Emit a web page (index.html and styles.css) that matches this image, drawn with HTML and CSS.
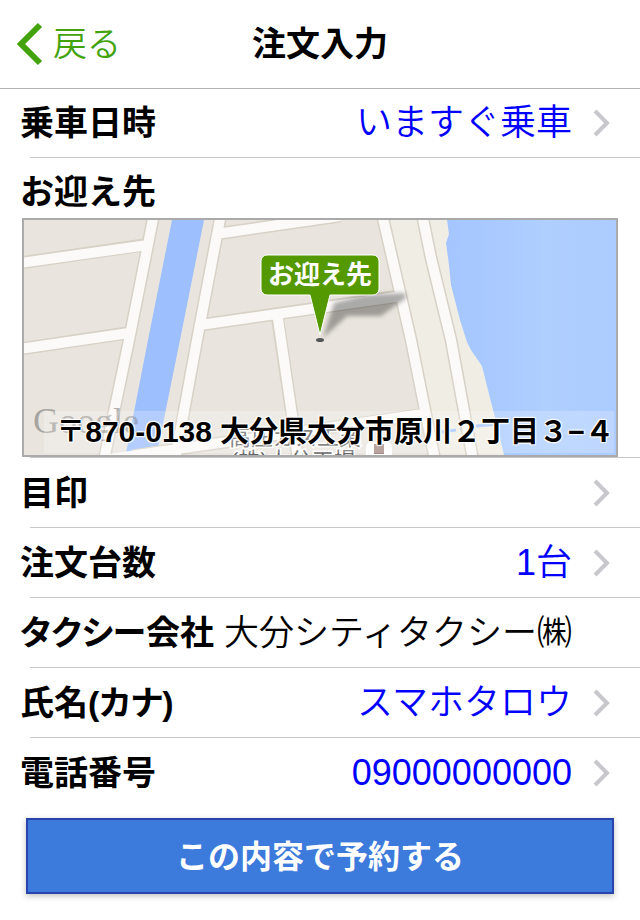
FILE: index.html
```
<!DOCTYPE html>
<html lang="ja">
<head>
<meta charset="utf-8">
<meta name="viewport" content="width=device-width, initial-scale=1">
<title>注文入力</title>
<link rel="stylesheet" href="styles.css">
</head>
<body>
<header class="header">
  <a class="back" href="#">
    <svg class="back-icon" viewBox="0 0 26 44" aria-hidden="true"><path d="M23 3 4 22 23 41"/></svg>
    <span>戻る</span>
  </a>
  <h1 class="title">注文入力</h1>
</header>
<main>
  <div class="list">
    <a class="row" href="#">
      <span class="label">乗車日時</span>
      <span class="value">いますぐ乗車</span>
      <svg class="chevron" viewBox="0 0 18 28" aria-hidden="true"><path d="M3 2 15 14 3 26"/></svg>
    </a>
    <section class="pickup">
      <h2 class="label pickup-label">お迎え先</h2>
      <div class="map">
        <svg class="map-art" viewBox="24 220 592 235" preserveAspectRatio="xMidYMid slice" role="img" aria-label="お迎え先">
          <defs>
            <linearGradient id="sea" x1="0" y1="0" x2="1" y2="0">
              <stop offset="0" stop-color="#a4c5ff"/>
              <stop offset="0.6" stop-color="#afcfff"/>
              <stop offset="1" stop-color="#accbff"/>
            </linearGradient>
            <filter id="soft" x="-20%" y="-20%" width="140%" height="140%"><feGaussianBlur stdDeviation="2"/></filter>
          </defs>
          <rect x="24" y="220" width="592" height="235" fill="#e9e5de"/>
          <path d="M383 220 411 340 434 455H616V220Z" fill="#f0ede5"/>
          <path d="M172 220H204L180 340 158 448 126 453 148 340Z" fill="#9dbffe"/>
          <path d="M447 220 449 234 446 243 449 265 451 285 460 320 467 342 471 350 482 366 490 398 497 425 504 455H616V220Z" fill="url(#sea)"/>
          <path d="M442 432 456 430M460 429 472 427M476 426 499 424" fill="none" stroke="#a7c7ff" stroke-width="3"/>
          <g fill="none" stroke="#d7d1c6" stroke-width="13">
            <path d="M154 214 129 340 104 460M221 214 197 340 175 460M20 263 144 245M20 349 127 333M216 234 340 216M200 325 400 296M277 315 292 415 298 460M133 456 177 449 428 414M382 214 411 340 435 460M422 214 431 258 451 340 473 460"/>
          </g>
          <g fill="none" stroke="#fbfaf8" stroke-width="10">
            <path d="M154 214 129 340 104 460M221 214 197 340 175 460M20 263 148 245M20 349 129 333M216 234 340 216M200 325 403 296M277 312 292 415 298 460M110 459 177 449 430 413M382 214 411 340 435 460M422 214 431 258 451 340 473 460"/>
          </g>
          <text class="watermark" x="33" y="433">Google</text>
          <rect x="366" y="442" width="26" height="18" rx="5" fill="#fff"/>
          <rect x="374" y="444" width="10" height="10" fill="#a48a85"/>
          <text class="place" x="229" y="445">高圧ガス工業</text>
          <text class="place" x="231" y="468">(株)大分工場</text>
          <path d="M323 338 334 303 365 295 405 293 406 298 381 316 347 316Z" fill="#000" fill-opacity="0.32" filter="url(#soft)"/>
          <ellipse cx="320" cy="340" rx="4" ry="2" fill="#555"/>
          <path d="M267 255H373a6 6 0 0 1 6 6V289a6 6 0 0 1-6 6H330L320 335 310 295H267a6 6 0 0 1-6-6V261a6 6 0 0 1 6-6Z" fill="#590" stroke="#fff"/>
          <text class="pin-text" x="320" y="284" text-anchor="middle">お迎え先</text>
        </svg>
        <p class="address">〒<span class="postcode">870-0138</span> 大分県大分市原川２丁目３−４</p>
      </div>
    </section>
    <a class="row" href="#">
      <span class="label">目印</span>
      <span class="value"></span>
      <svg class="chevron" viewBox="0 0 18 28" aria-hidden="true"><path d="M3 2 15 14 3 26"/></svg>
    </a>
    <a class="row" href="#">
      <span class="label">注文台数</span>
      <span class="value">1台</span>
      <svg class="chevron" viewBox="0 0 18 28" aria-hidden="true"><path d="M3 2 15 14 3 26"/></svg>
    </a>
    <div class="row">
      <span class="label proportional">タクシー会社</span>
      <span class="value company">大分シティタクシー㈱</span>
    </div>
    <a class="row" href="#">
      <span class="label proportional">氏名(カナ)</span>
      <span class="value">スマホタロウ</span>
      <svg class="chevron" viewBox="0 0 18 28" aria-hidden="true"><path d="M3 2 15 14 3 26"/></svg>
    </a>
    <a class="row row-last" href="#">
      <span class="label">電話番号</span>
      <span class="value">09000000000</span>
      <svg class="chevron" viewBox="0 0 18 28" aria-hidden="true"><path d="M3 2 15 14 3 26"/></svg>
    </a>
  </div>
  <button class="submit" type="button">この内容で予約する</button>
</main>
</body>
</html>
```
FILE: styles.css
```
* {
  box-sizing: border-box;
}

body {
  margin: 0;
  background: #fff;
  color: #000;
  font-family: "Liberation Sans", "Noto Sans CJK JP", sans-serif;
  font-size: 34px;
  line-height: 48px;
}

a {
  color: inherit;
  text-decoration: none;
}

.header {
  display: grid;
  grid-template-columns: 1fr auto 1fr;
  align-items: center;
  min-height: 89px;
  padding: 0 17px;
  border-bottom: 1px solid #b2b2b2;
}

.back {
  display: flex;
  align-items: center;
  gap: 10px;
  color: #43a30c;
  font-weight: 350;
}

.back-icon {
  width: 26px;
  height: 44px;
  fill: none;
  stroke: currentColor;
  stroke-width: 6;
}

.title {
  margin: 0;
  font-size: 34px;
  font-weight: 600;
}

.list {
  margin-top: -1px;
}

.row {
  display: flex;
  align-items: center;
  min-height: 70px;
  padding: 0 30px 0 20px;
}

.row,
.pickup {
  background: linear-gradient(#c8c7cc, #c8c7cc) 30px 100% / 100% 1px no-repeat;
}

.row-last {
  background: none;
}

.label {
  flex: none;
  font-size: 34px;
  font-weight: 600;
}

.proportional {
  font-feature-settings: "palt";
}

.value {
  flex: 1;
  color: #00f;
  font-size: 36px;
  font-weight: 350;
  text-align: right;
  white-space: nowrap;
}

.company {
  padding-right: 38px;
  color: #000;
  font-size: 35px;
}

.chevron {
  flex: none;
  width: 18px;
  height: 28px;
  margin-left: 20px;
  fill: none;
  stroke: #c7c7cc;
  stroke-width: 4;
}

.pickup {
  padding: 10px 22px 1px;
}

.pickup-label {
  margin: 0 0 2px -2px;
}

.map {
  display: grid;
  height: 239px;
  border: 2px solid #aaa;
  overflow: hidden;
}

.map-art {
  grid-area: 1 / 1;
  width: 100%;
  height: 235px;
}

.watermark {
  fill: #666;
  fill-opacity: 0.5;
  font-family: "Liberation Serif", serif;
  font-size: 36px;
}

.place {
  fill: #666;
  font-size: 22px;
  stroke: #fff;
  stroke-width: 3;
  paint-order: stroke;
}

.pin-text {
  fill: #fff;
  font-size: 26px;
  font-weight: 700;
}

.address {
  grid-area: 1 / 1;
  z-index: 1;
  align-self: end;
  margin: 0 2px 2px 20px;
  background: rgba(255, 255, 255, 0.22);
  font-size: 29px;
  font-weight: 600;
  line-height: 41px;
  text-align: right;
  white-space: nowrap;
  text-shadow: 1px 1px 1px #fff, -1px 1px 1px #fff, 1px -1px 1px #fff, -1px -1px 1px #fff;
}

.postcode {
  font-size: 30px;
}

.submit {
  display: block;
  width: calc(100% - 52px);
  min-height: 76px;
  margin: 10px 26px 26px;
  padding: 0 0 4px;
  border: 2px solid #2a43a8;
  background: #3c7adc;
  color: #fff;
  font-family: inherit;
  font-size: 32px;
  font-weight: 600;
  box-shadow: 0 2px 6px rgba(0, 0, 0, 0.25);
}
```
